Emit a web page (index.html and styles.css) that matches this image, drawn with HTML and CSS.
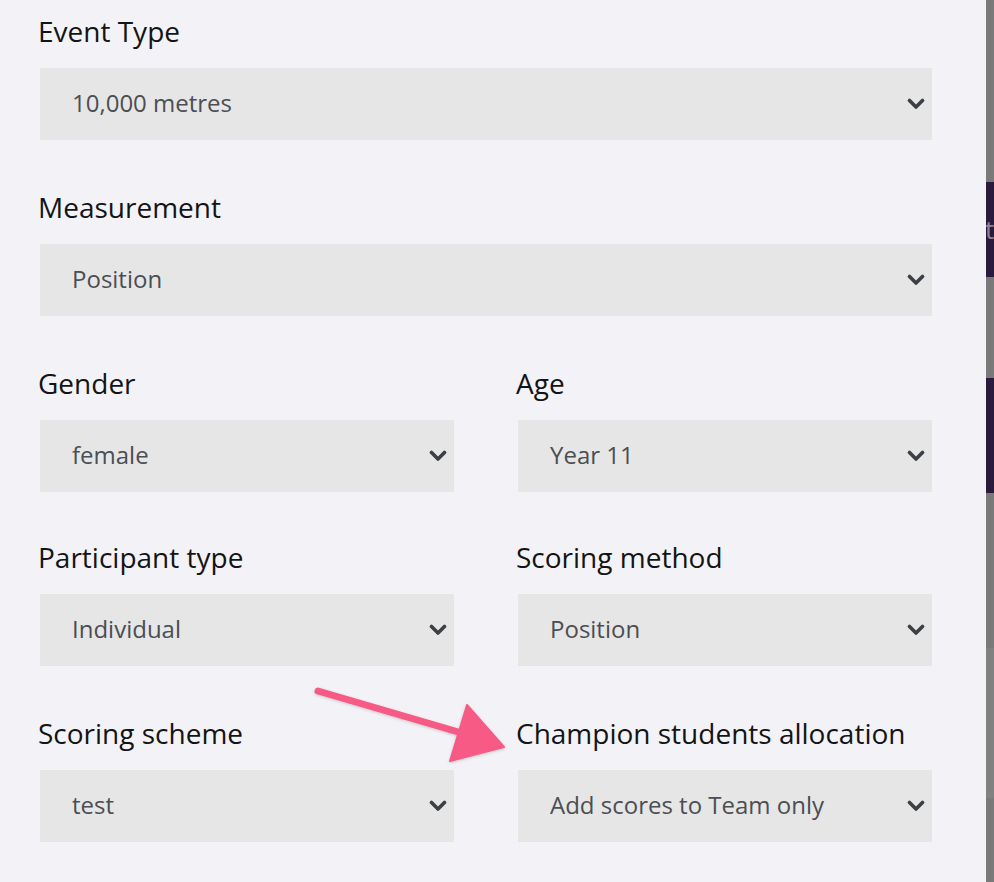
FILE: index.html
```html
<!DOCTYPE html>
<html>
<head>
<meta charset="utf-8">
<link rel="stylesheet" href="styles.css">
</head>
<body>
<div class="page">
  <main class="form">
    <div class="field full">
      <div class="label">Event Type</div>
      <div class="select"><span>10,000 metres</span><svg class="chev" viewBox="0 0 18 12"><polyline points="2.5,2.5 9,9 15.5,2.5"/></svg></div>
    </div>
    <div class="field full">
      <div class="label">Measurement</div>
      <div class="select"><span>Position</span><svg class="chev" viewBox="0 0 18 12"><polyline points="2.5,2.5 9,9 15.5,2.5"/></svg></div>
    </div>
    <div class="field">
      <div class="label">Gender</div>
      <div class="select"><span>female</span><svg class="chev" viewBox="0 0 18 12"><polyline points="2.5,2.5 9,9 15.5,2.5"/></svg></div>
    </div>
    <div class="field">
      <div class="label">Age</div>
      <div class="select"><span>Year 11</span><svg class="chev" viewBox="0 0 18 12"><polyline points="2.5,2.5 9,9 15.5,2.5"/></svg></div>
    </div>
    <div class="field">
      <div class="label">Participant type</div>
      <div class="select"><span>Individual</span><svg class="chev" viewBox="0 0 18 12"><polyline points="2.5,2.5 9,9 15.5,2.5"/></svg></div>
    </div>
    <div class="field">
      <div class="label">Scoring method</div>
      <div class="select"><span>Position</span><svg class="chev" viewBox="0 0 18 12"><polyline points="2.5,2.5 9,9 15.5,2.5"/></svg></div>
    </div>
    <div class="field">
      <div class="label">Scoring scheme</div>
      <div class="select"><span>test</span><svg class="chev" viewBox="0 0 18 12"><polyline points="2.5,2.5 9,9 15.5,2.5"/></svg></div>
    </div>
    <div class="field">
      <div class="label">Champion students allocation</div>
      <div class="select"><span>Add scores to Team only</span><svg class="chev" viewBox="0 0 18 12"><polyline points="2.5,2.5 9,9 15.5,2.5"/></svg></div>
    </div>
  </main>
  <aside class="strip">
    <div class="seg g1"></div>
    <div class="seg p1"><span class="peek">t</span></div>
    <div class="seg g2"></div>
    <div class="seg p2"></div>
    <div class="seg g3"></div>
    <div class="seg g4"></div>
    <div class="seg g5"></div>
  </aside>
  <svg class="arrow" viewBox="0 0 994 882" width="994" height="882">
    <defs>
      <filter id="sh" x="-10%" y="-10%" width="120%" height="130%">
        <feDropShadow dx="0" dy="1" stdDeviation="1.5" flood-color="#000" flood-opacity="0.18"/>
      </filter>
    </defs>
    <g filter="url(#sh)" fill="#f65a85" stroke="#f65a85">
      <line x1="318" y1="691" x2="472" y2="736" stroke-width="7" stroke-linecap="round"/>
      <polygon points="467,705 504,747 450,761" stroke-width="2" stroke-linejoin="round"/>
    </g>
  </svg>
</div>
</body>
</html>
```
FILE: styles.css
```css
html, body {
  margin: 0;
  padding: 0;
}
body {
  background: #f3f3f7;
  font-family: "Open Sans", "Noto Sans", sans-serif;
}
.page {
  position: relative;
  display: flex;
  width: 994px;
  height: 882px;
  overflow: hidden;
}
.form {
  flex: 1;
  padding: 12px 0 0 40px;
  display: grid;
  grid-template-columns: 414px 414px;
  column-gap: 64px;
  grid-template-rows: 176px 176px 174px 176px;
  align-content: start;
}
.field.full {
  grid-column: 1 / span 2;
}
.label {
  font-size: 28px;
  line-height: 38px;
  color: #141414;
  margin: 0 0 18px -2px;
  white-space: nowrap;
}
.select {
  height: 72px;
  box-sizing: border-box;
  background: #e6e6e6;
  display: flex;
  align-items: center;
  justify-content: space-between;
  padding: 0 7px 3px 32px;
  font-size: 24px;
  color: #4b4e53;
}
.chev {
  width: 18px;
  height: 12px;
  margin-top: 3px;
  fill: none;
  stroke: #3c3f44;
  stroke-width: 3.6;
  stroke-linecap: round;
  stroke-linejoin: round;
}
.strip {
  width: 8px;
  display: flex;
  flex-direction: column;
  background: #7a7a7a;
}
.seg { flex: none; overflow: hidden; }
.g1 { height: 182px; }
.p1 { height: 95px; background: #2a1a3c; }
.g2 { height: 101px; }
.p2 { height: 115px; background: #2a1a3c; }
.g3 { height: 155px; }
.g4 { height: 150px; background: #818181; }
.g5 { height: 84px; }
.peek {
  display: block;
  margin: 29px 0 0 -1px;
  font-size: 26px;
  line-height: 36px;
  color: #8e8799;
}
.arrow {
  position: absolute;
  left: 0;
  top: 0;
  pointer-events: none;
}
```
